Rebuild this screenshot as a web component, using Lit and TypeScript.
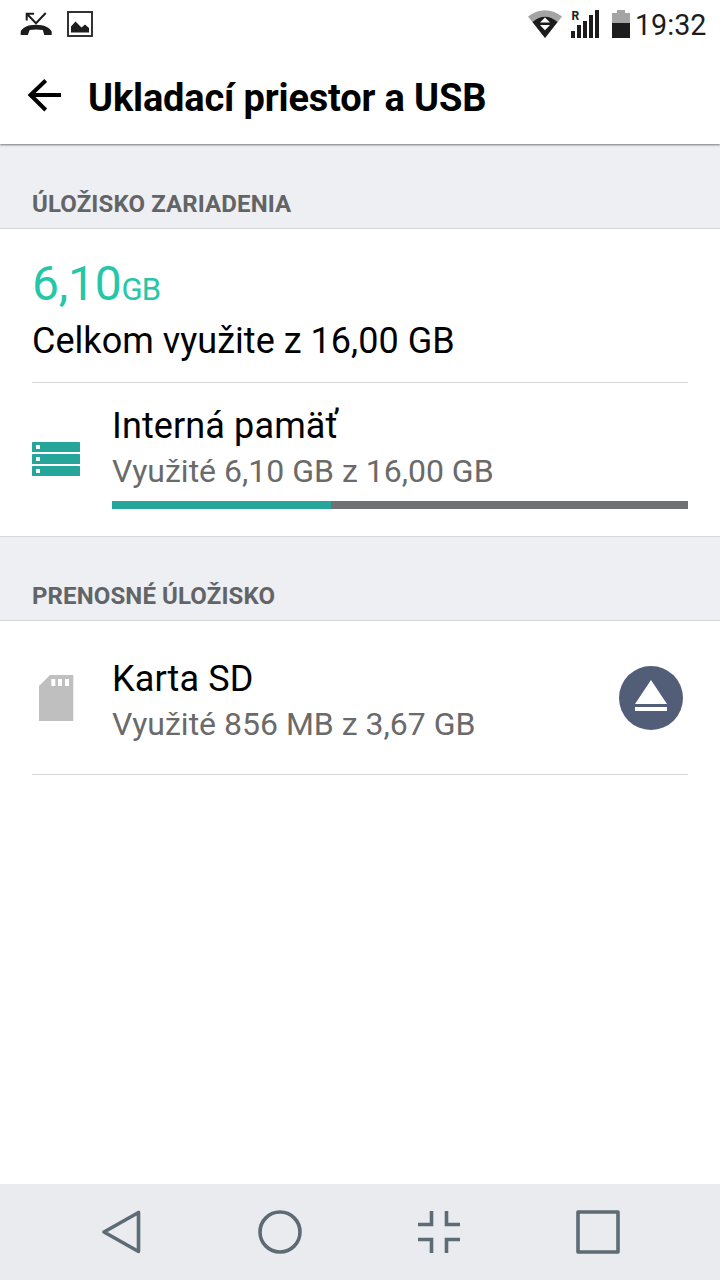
import { LitElement, html, css } from "lit";
import { customElement, property } from "lit/decorators.js";

@customElement("status-bar")
class StatusBar extends LitElement {
  static styles = css`
    :host { display: flex; height: 48px; box-sizing: border-box; justify-content: space-between; color: #1c1c1c; background: #fff; }
    svg { display: block; flex: none; }
    .right { display: flex; width: 192px; }
    .time { font-size: 28.700px; line-height: 50px; white-space: nowrap; }
    .roam { font: bold 12px/1 Roboto, sans-serif; }
  `;
  render() {
    return html`
      <svg width="120" height="48" viewBox="0 0 120 48">
        <path d="M20.700 35v-3.200C22 27.500 28 24.700 36 24.700S50.200 27.500 51.700 31.800V35H44.300L42.800 30Q36 29 29.700 30L27.800 35Z" fill="#1c1c1c" />
        <path d="M45.700 13 36 23.300 27 14M26.700 20.500V13.800H34" fill="none" stroke="#1c1c1c" stroke-width="2" />
        <rect x="68" y="12" width="24" height="24" fill="none" stroke="#333" stroke-width="2" />
        <path d="M71 32.500V26.500L75.500 21.500 81.500 27.500 85 24.500 89 28V32.500Z" fill="#1c1c1c" />
      </svg>
      <div class="right">
        <svg width="107" height="48" viewBox="528 0 107 48">
          <path d="M528 16.500Q545 3.800 562 16.500L545 38Z" fill="#a4a4a4" />
          <path d="M532.500 22Q545 11.500 557.500 22L545 38Z" fill="#1c1c1c" />
          <path d="M540 22.500 545 17.500 550 22.500ZM540 25H550L545 30.300Z" fill="#fff" />
          <path d="M571 31h4v7h-4zM577 25h4v13h-4zM583 21h4v17h-4zM589 15h4v23h-4zM595 10h4v28h-4z" fill="#1c1c1c" />
          <text class="roam" x="571.500" y="20" textLength="7.700" lengthAdjust="spacingAndGlyphs" fill="#1c1c1c">R</text>
          <path d="M617 10h8v3h5v10H612V13h5z" fill="#a4a4a4" />
          <path d="M612 23h18v15h-18z" fill="#1c1c1c" />
        </svg>
        <span class="time">19:32</span>
      </div>
    `;
  }
}

@customElement("section-header")
class SectionHeader extends LitElement {
  static styles = css`
    :host { display: block; box-sizing: border-box; padding: 0 32px 10px; background: #edeff3; border-bottom: 1px solid #d5d6d8; color: #636466; font-size: 24px; font-weight: 700; line-height: 28px; letter-spacing: 0.120px; }
  `;
  render() {
    return html`<slot></slot>`;
  }
}

@customElement("storage-row")
class StorageRow extends LitElement {
  @property() name = "";
  @property() summary = "";
  @property({ type: Number }) percent = -1;

  static styles = css`
    :host { display: flex; }
    .icon { display: flex; flex: 0 0 80px; }
    .body { flex: 1; white-space: nowrap; }
    .name { font-size: 36px; line-height: 42px; letter-spacing: 0.120px; color: #000; }
    .summary { font-size: 32px; line-height: 38px; margin-top: 5px; color: #6a6a6a; }
    .track { height: 8px; margin-top: 11px; background: #707173; }
    .fill { height: 8px; background: #26a69a; }
  `;
  render() {
    return html`
      <div class="icon"><slot name="icon"></slot></div>
      <div class="body">
        <div class="name">${this.name}</div>
        <div class="summary">${this.summary}</div>
        ${this.percent >= 0
          ? html`<div class="track"><div class="fill" style="width:${this.percent}%"></div></div>`
          : ""}
      </div>
      <slot name="action"></slot>
    `;
  }
}

@customElement("nav-bar")
class NavBar extends LitElement {
  static styles = css`
    :host { display: flex; height: 96px; background: #e9ebee; padding: 0 42px; }
    svg { display: block; flex: 1; height: 96px; min-width: 0; fill: none; stroke: #5d6b74; stroke-width: 3.600; }
  `;
  render() {
    return html`
      <svg viewBox="42 0 159 96"><path d="M138.500 28.500V67.500L104 48Z" stroke-linejoin="round" /></svg>
      <svg viewBox="201 0 159 96"><circle cx="280" cy="48" r="20" /></svg>
      <svg viewBox="360 0 159 96"><path d="M418 40.500H431.500V27M446.500 27V40.500H460M418 55.500H431.500V69M460 55.500H446.500V69" /></svg>
      <svg viewBox="519 0 159 96"><rect x="578" y="28" width="40" height="40" stroke-linejoin="round" /></svg>
    `;
  }
}

@customElement("app-root")
class AppRoot extends LitElement {
  static styles = css`
    :host { display: flex; flex-direction: column; width: 720px; height: 1280px; overflow: hidden; background: #fff; font-family: Roboto, sans-serif; color: #000; }
    svg { display: block; flex: none; }
    header { display: flex; height: 96px; background: #fff; box-shadow: 0 1px 2px rgba(0, 0, 0, 0.5); clip-path: inset(0 0 -4px 0); position: relative; flex: none; }
    h1 { margin: 0; font-size: 38px; font-weight: 700; line-height: 100px; white-space: nowrap; letter-spacing: -0.170px; }
    .first { height: 85px; padding-top: 46px; }
    .second { height: 85px; padding-top: 45px; border-top: 1px solid #d5d6d8; }
    .total { margin: 0 32px; height: 154px; box-sizing: border-box; padding-top: 27px; border-bottom: 1px solid #d5d6d8; white-space: nowrap; }
    .amount { font-size: 48px; line-height: 56px; height: 56px; letter-spacing: -0.200px; color: #26c6a9; }
    .unit { font-size: 31px; letter-spacing: -0.900px; }
    .caption { font-size: 36px; line-height: 42px; margin-top: 8px; letter-spacing: 0.030px; }
    .internal { margin: 0 32px; height: 153px; box-sizing: border-box; padding-top: 22px; }
    .sd { margin: 0 32px; height: 154px; box-sizing: border-box; padding-top: 37px; border-bottom: 1px solid #d5d6d8; }
    .drive { margin-top: 37px; }
    .card { margin: 16px 0 0 6px; }
    .eject { margin: 8px 5px 0 0; }
    nav-bar { margin-top: auto; }
  `;
  render() {
    return html`
      <status-bar></status-bar>
      <header>
        <svg width="88" height="96" viewBox="0 0 88 96">
          <path d="M61 47H30.500M45.700 32.500 30.500 47 45.700 62" fill="none" stroke="#000" stroke-width="4" />
        </svg>
        <h1>Ukladací priestor a USB</h1>
      </header>
      <section-header class="first">ÚLOŽISKO ZARIADENIA</section-header>
      <div class="total">
        <div class="amount">6,10<span class="unit">GB</span></div>
        <div class="caption">Celkom využite z 16,00 GB</div>
      </div>
      <storage-row class="internal" name="Interná pamäť" summary="Využité 6,10 GB z 16,00 GB" percent="38.020">
        <svg slot="icon" class="drive" width="48" height="34" viewBox="0 0 48 34">
          <g fill="#26a69a"><rect width="48" height="10" rx=".5" /><rect y="12" width="48" height="10" rx=".5" /><rect y="24" width="48" height="10" rx=".5" /></g>
          <path d="M4 3h4v4H4zM4 15h4v4H4zM4 27h4v4H4z" fill="#fff" />
        </svg>
      </storage-row>
      <section-header class="second">PRENOSNÉ ÚLOŽISKO</section-header>
      <storage-row class="sd" name="Karta SD" summary="Využité 856 MB z 3,67 GB">
        <svg slot="icon" class="card" width="36" height="48" viewBox="38 674 36 48">
          <path d="M50 675H73.300V721H39V686Z" fill="#bfbfbf" />
          <path d="M51.300 679h4v7h-4zM58 679h4v7h-4zM65 679h4v7h-4z" fill="#fff" />
        </svg>
        <svg slot="action" class="eject" width="64" height="64" viewBox="0 0 64 64">
          <circle cx="32" cy="32" r="32" fill="#525e78" />
          <path d="M32 14 48 38H16ZM16 41h32v4H16z" fill="#fff" />
        </svg>
      </storage-row>
      <nav-bar></nav-bar>
    `;
  }
}
